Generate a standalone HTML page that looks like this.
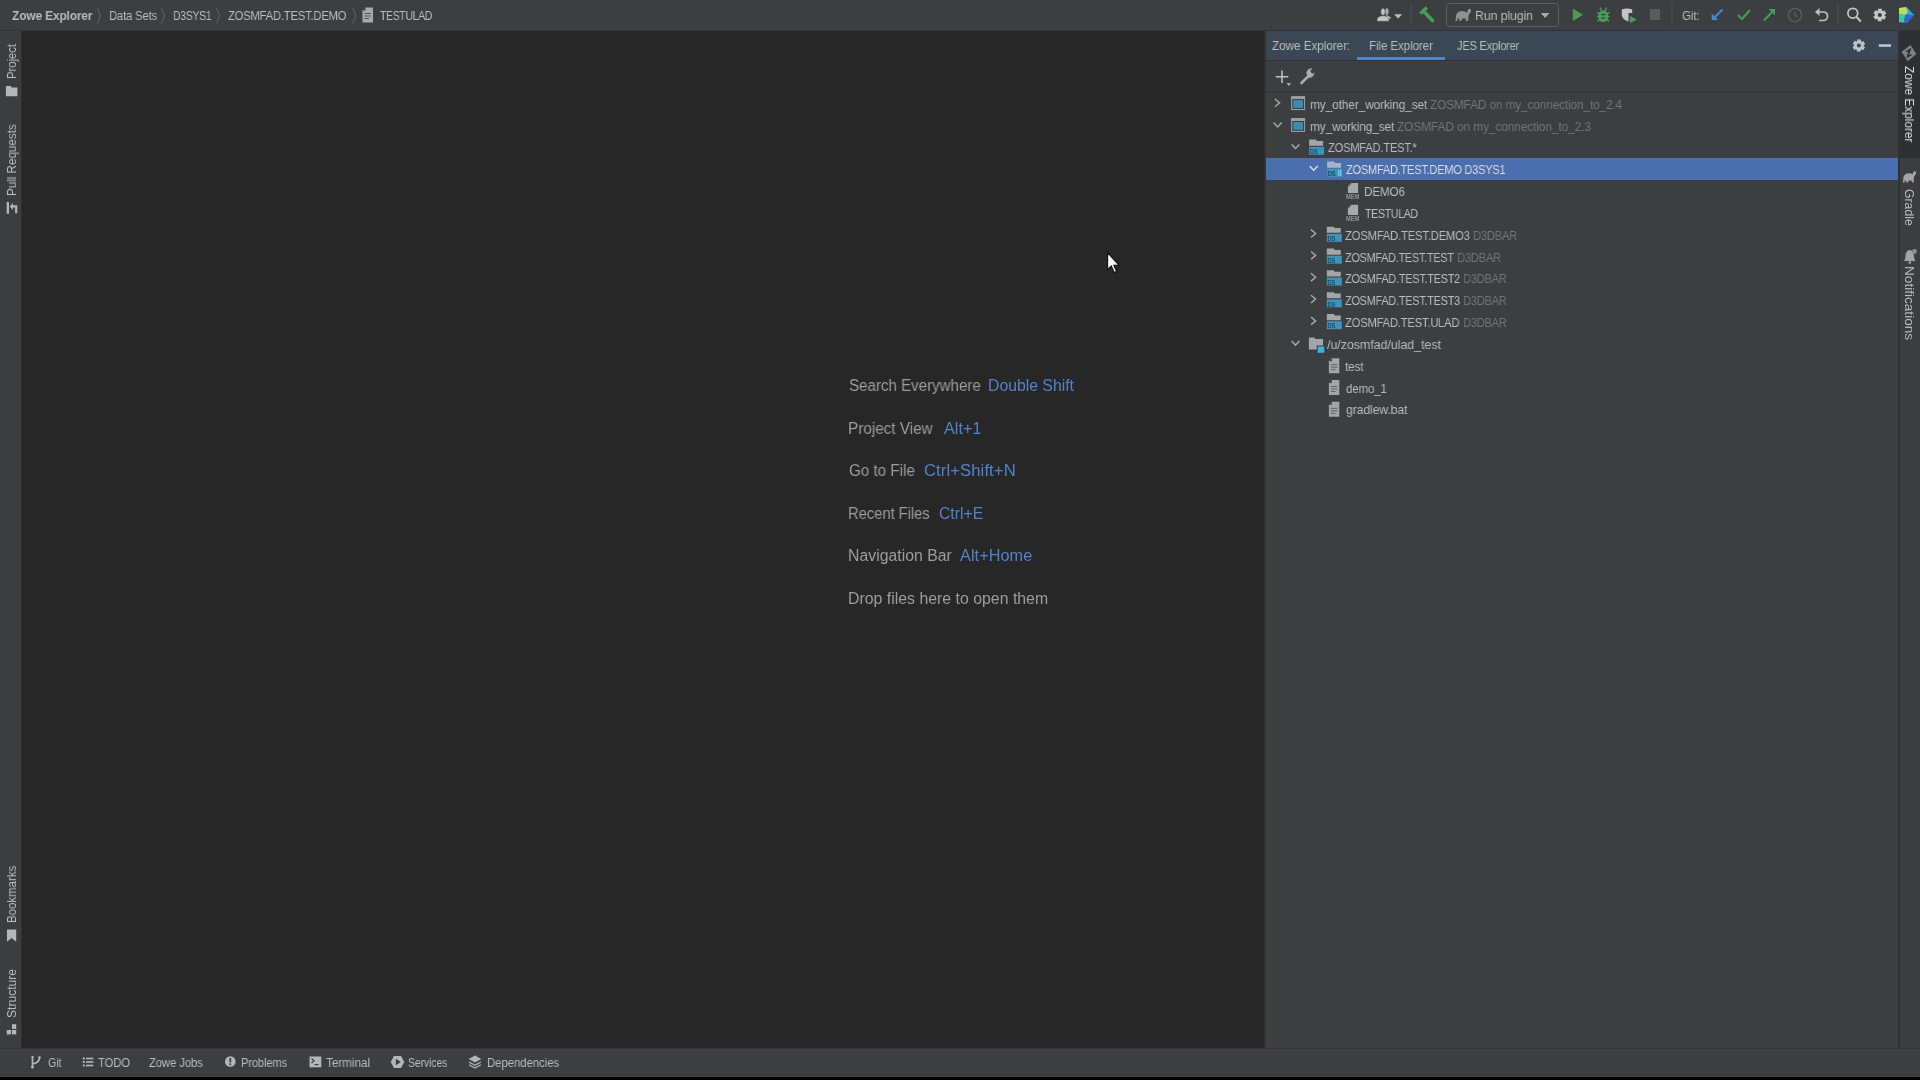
<!DOCTYPE html>
<html><head><meta charset="utf-8"><title>Zowe Explorer</title>
<style>
html,body{margin:0;padding:0;width:1920px;height:1080px;overflow:hidden;background:#000;}
body{position:relative;font-family:"Liberation Sans",sans-serif;}
.r{position:absolute;}
.t{position:absolute;white-space:nowrap;transform-origin:0 0;font-family:"Liberation Sans",sans-serif;will-change:transform;}
svg{position:absolute;overflow:visible;}
</style></head><body>
<!-- top bar -->
<div class="r" style="left:0;top:0;width:1920px;height:31px;background:#3C3E42"></div>
<div class="r" style="left:0;top:30px;width:1920px;height:1px;background:#323437"></div>
<!-- left strip -->
<div class="r" style="left:0;top:31px;width:21px;height:1018px;background:#3C3D41"></div>
<div class="r" style="left:21px;top:31px;width:1px;height:1018px;background:#2F2F31"></div>
<!-- editor -->
<div class="r" style="left:22px;top:31px;width:1242px;height:1018px;background:#272727"></div>
<!-- panel -->
<div class="r" style="left:1264px;top:31px;width:1px;height:1018px;background:#2E302F"></div>
<div class="r" style="left:1265px;top:31px;width:1px;height:1018px;background:#363836"></div>
<div class="r" style="left:1266px;top:31px;width:632px;height:1018px;background:#3C3E42"></div>
<div class="r" style="left:1266px;top:92px;width:6px;height:957px;background:#3E3F3E"></div>
<div class="r" style="left:1266px;top:31px;width:632px;height:29px;background:#3B4755"></div>
<div class="r" style="left:1266px;top:60px;width:632px;height:1px;background:#323438"></div>
<div class="r" style="left:1357px;top:57px;width:88px;height:3px;background:#4A88C7"></div>
<div class="r" style="left:1266px;top:61px;width:632px;height:3px;background:#3F3F41"></div>
<div class="r" style="left:1266px;top:91px;width:632px;height:1.6px;background:#37383B"></div>
<div class="r" style="left:1266px;top:157.8px;width:632px;height:22px;background:#4B6EAF"></div>
<div class="r" style="left:1266px;top:179.8px;width:632px;height:1px;background:#343B4A"></div>
<!-- right strip -->
<div class="r" style="left:1898px;top:31px;width:2px;height:1018px;background:#2F3134"></div>
<div class="r" style="left:1900px;top:31px;width:20px;height:1018px;background:#3C3D41"></div>
<div class="r" style="left:1900px;top:31px;width:20px;height:126.5px;background:#2D2F32"></div>
<!-- status bar -->
<div class="r" style="left:0;top:1048px;width:1920px;height:1px;background:#323437"></div>
<div class="r" style="left:0;top:1049px;width:1920px;height:28px;background:#3C3E42"></div>
<div class="r" style="left:0;top:1049px;width:1920px;height:6.5px;background:#404042"></div>
<div class="r" style="left:0;top:1072px;width:1920px;height:5px;background:#3D3F3E"></div>
<div class="r" style="left:0;top:1077px;width:1920px;height:3px;background:#000"></div>
<svg width="1920" height="1080" style="left:0;top:0;will-change:transform"><path d="M97.5,8 L100.5,15.7 L97.5,23.4" fill="none" stroke="#5A5D60" stroke-width="1.2"/><path d="M161.6,8 L164.6,15.7 L161.6,23.4" fill="none" stroke="#5A5D60" stroke-width="1.2"/><path d="M216.6,8 L219.6,15.7 L216.6,23.4" fill="none" stroke="#5A5D60" stroke-width="1.2"/><path d="M352.8,8 L355.8,15.7 L352.8,23.4" fill="none" stroke="#5A5D60" stroke-width="1.2"/><path d="M365.5,7.5 H373 V22.5 H362.5 V10.5 Z" fill="#A7A9AC"/><path d="M362.5,10.5 L365.5,7.5 V10.5 Z" fill="#3C3F43"/><rect x="364.5" y="13" width="6.5" height="1" fill="#55585B"/><rect x="364.5" y="15.5" width="6.5" height="1" fill="#55585B"/><rect x="364.5" y="18" width="4.5" height="1" fill="#55585B"/><ellipse cx="1386.9" cy="11.6" rx="1.7" ry="3.4" fill="#A9ABAE"/><path d="M1385.2,15.2 Q1390.6,15.3 1391,18.6 L1388.6,19.2 Z" fill="#A9ABAE"/><ellipse cx="1383" cy="11.7" rx="2.2" ry="3.5" fill="#C2C4C7" stroke="#3C3E42" stroke-width="0.5"/><path d="M1377,21.2 V19.6 Q1377.6,16 1383,15.8 Q1388.4,16 1389,19.6 V21.2 Z" fill="#C2C4C7" stroke="#3C3E42" stroke-width="0.4"/><path d="M1394,14.2 H1402.2 L1398.1,18.6 Z" fill="#BDBFC2"/><rect x="1410.5" y="4" width="1" height="21" fill="#4E5154"/><rect x="1671.5" y="4" width="1" height="21" fill="#4E5154"/><rect x="1837.5" y="4" width="1" height="21" fill="#4E5154"/><path d="M1423.6,11.2 L1432.4,20.6" stroke="#499C54" stroke-width="3.6" stroke-linecap="round"/><path d="M1420.4,13.6 L1426.9,7.4" stroke="#499C54" stroke-width="3.4" stroke-linecap="butt"/><rect x="1446.5" y="3.5" width="112" height="23" rx="3" fill="none" stroke="#5B5E61" stroke-width="1"/><path d="M1455.5,21 L1456,16 Q1456.5,11.5 1461.5,11 Q1465.5,11 1467,13 Q1467.5,9 1469.5,8.8 Q1471.5,9 1471,11.5 Q1470,13 1468.8,14.5 L1468,21 L1466,21 L1465.5,18.5 L1462,18.5 L1461.5,21 L1459.5,21 L1459,18.5 L1457.5,18.5 L1457.2,21 Z" fill="#8F9194"/><path d="M1540.8,13 H1549.4 L1545.1,18 Z" fill="#A9ABAE"/><path d="M1572.8,8.6 L1583,14.85 L1572.8,21.1 Z" fill="#499C54"/><ellipse cx="1603.2" cy="16.2" rx="5" ry="6" fill="#499C54"/><path d="M1600,7.5 L1601.5,11 M1606.5,7.5 L1605,11 M1597,12.5 L1600,13.5 M1609.5,12.5 L1606.5,13.5 M1597,16.5 H1600 M1609.5,16.5 H1606.5 M1597.5,21 L1600,19.5 M1609,21 L1606.5,19.5" stroke="#499C54" stroke-width="1.5"/><rect x="1601.5" y="14" width="3.5" height="1.2" fill="#2E3B30"/><rect x="1601.5" y="17.5" width="3.5" height="1.2" fill="#2E3B30"/><path d="M1621.8,9.5 Q1627,7.6 1632.2,9.5 V13 H1628.5 V21.5 Q1623,20 1621.8,15.5 Z" fill="#C3C5C7"/><path d="M1629.8,15.8 L1636.8,19.5 L1629.8,23.2 Z" fill="#499C54"/><rect x="1650" y="9" width="10" height="11" fill="#595B5E"/><path d="M1722.5,9.5 L1714,18" stroke="#3E8ED0" stroke-width="2"/><path d="M1711.7,20 V13.5 L1718.2,20 Z" fill="#3E8ED0"/><path d="M1738,15 L1742,19 L1750,10" fill="none" stroke="#499C54" stroke-width="2.2"/><path d="M1763.8,20.5 L1772,12.3" stroke="#499C54" stroke-width="2"/><path d="M1775,9 V15.5 L1768.5,9 Z" fill="#499C54"/><circle cx="1795" cy="15" r="6.6" fill="none" stroke="#5C5F62" stroke-width="1.3"/><path d="M1795,11.5 V15.5 L1797.5,17" fill="none" stroke="#5C5F62" stroke-width="1.2"/><path d="M1817,12 H1823 Q1827.5,12 1827.5,16.3 Q1827.5,20.5 1823,20.5 H1819" fill="none" stroke="#BDBFC1" stroke-width="1.6"/><path d="M1815,12 L1819.5,8 V16 Z" fill="#BDBFC1"/><circle cx="1852.8" cy="13.2" r="4.9" fill="none" stroke="#C3C5C7" stroke-width="1.8"/><path d="M1856.3,16.8 L1860.8,21.5" stroke="#C3C5C7" stroke-width="2"/><path d="M1877.85,8.69 L1881.75,8.69 L1881.97,10.50 L1881.29,10.23 L1883.18,11.32 L1884.29,10.16 L1886.24,13.54 L1884.79,14.63 L1884.68,13.91 L1884.68,16.09 L1886.24,16.46 L1884.29,19.84 L1882.61,19.13 L1883.18,18.68 L1881.29,19.77 L1881.75,21.31 L1877.85,21.31 L1877.63,19.50 L1878.31,19.77 L1876.42,18.68 L1875.31,19.84 L1873.36,16.46 L1874.81,15.37 L1874.92,16.09 L1874.92,13.91 L1873.36,13.54 L1875.31,10.16 L1876.99,10.87 L1876.42,11.32 L1878.31,10.23 Z" fill="#C3C5C7"/><circle cx="1879.8" cy="15.0" r="2.1" fill="#3C3F43"/><path d="M1899,8 L1906,7 L1914,15 L1907,23 L1899,22 Z" fill="#2F8BD0"/><path d="M1899,8 L1906,7 L1910,11 L1905,15 L1899,14 Z" fill="#B7E05A"/><path d="M1899,14 L1905,15 L1904,22.5 L1899,22 Z" fill="#3BC9A8"/><path d="M1906,7 L1914,15 L1909,15 Z" fill="#29A8E0"/><path d="M1905,15 L1914,15 L1907,23 L1904,22.5 Z" fill="#3A64C8"/><path d="M1857.01,39.39 L1860.79,39.39 L1861.03,41.09 L1860.36,40.82 L1862.22,41.89 L1863.25,40.80 L1865.14,44.08 L1863.79,45.14 L1863.68,44.43 L1863.68,46.57 L1865.14,46.92 L1863.25,50.20 L1861.66,49.55 L1862.22,49.11 L1860.36,50.18 L1860.79,51.61 L1857.01,51.61 L1856.77,49.91 L1857.44,50.18 L1855.58,49.11 L1854.55,50.20 L1852.66,46.92 L1854.01,45.86 L1854.12,46.57 L1854.12,44.43 L1852.66,44.08 L1854.55,40.80 L1856.14,41.45 L1855.58,41.89 L1857.44,40.82 Z" fill="#BFC3C8"/><circle cx="1858.9" cy="45.5" r="2.0" fill="#3B4755"/><rect x="1878.8" y="44.3" width="12.2" height="2.5" fill="#C5C9CD"/><path d="M1282,70.5 V83 M1275.7,76.8 H1288.3" stroke="#BEC0C2" stroke-width="1.6"/><path d="M1286.5,83.2 H1291 L1288.75,85.8 Z" fill="#BEC0C2"/><path d="M1301.5,83 L1308,76.5" stroke="#A9ABAE" stroke-width="2.6" stroke-linecap="round"/><path d="M1306.2,73.5 Q1307,68.2 1312.6,68.3 L1310.3,70.8 L1311.4,73 L1313.7,73.8 L1314.4,71.2 Q1314.8,77 1309.3,78 Z" fill="#A9ABAE"/><path d="M1274.8999999999999,99.0 L1279.6000000000001,102.85 L1274.8999999999999,106.7" fill="none" stroke="#A7A9AC" stroke-width="1.4"/><path d="M1273.6,122.6 L1277.65,126.9 L1281.7,122.6" fill="none" stroke="#A7A9AC" stroke-width="1.4"/><path d="M1291.6,144.4 L1295.5,148.5 L1299.4,144.4" fill="none" stroke="#A7A9AC" stroke-width="1.4"/><path d="M1309.6,166.1 L1313.7,170.20000000000002 L1317.8000000000002,166.1" fill="none" stroke="#D5DCE8" stroke-width="1.4"/><path d="M1311.0,229.64 L1315.6000000000001,233.54 L1311.0,237.44" fill="none" stroke="#A7A9AC" stroke-width="1.4"/><path d="M1311.0,251.48 L1315.6000000000001,255.38 L1311.0,259.28" fill="none" stroke="#A7A9AC" stroke-width="1.4"/><path d="M1311.0,273.32000000000005 L1315.6000000000001,277.22 L1311.0,281.12" fill="none" stroke="#A7A9AC" stroke-width="1.4"/><path d="M1311.0,295.16 L1315.6000000000001,299.06 L1311.0,302.96" fill="none" stroke="#A7A9AC" stroke-width="1.4"/><path d="M1311.0,317.0 L1315.6000000000001,320.9 L1311.0,324.79999999999995" fill="none" stroke="#A7A9AC" stroke-width="1.4"/><path d="M1291.6,340.90000000000003 L1295.5,345.09999999999997 L1299.4,340.90000000000003" fill="none" stroke="#A7A9AC" stroke-width="1.4"/><rect x="1291.1" y="96.1" width="14" height="14" fill="#9C9EA1"/><rect x="1292.3" y="99.1" width="11.8" height="9.8" fill="#2D3C48"/><rect x="1293.3" y="100.1" width="9.8" height="7.8" fill="#3B8DAD"/><rect x="1291.1" y="118.0" width="14" height="14" fill="#9C9EA1"/><rect x="1292.3" y="121.0" width="11.8" height="9.8" fill="#2D3C48"/><rect x="1293.3" y="122.0" width="9.8" height="7.8" fill="#3B8DAD"/><path d="M1309.1,139.6 H1316.1 L1316.8999999999999,141.0 H1323.1 V145.79999999999998 H1309.1 Z" fill="#A3A5A8"/><rect x="1309.1" y="146.79999999999998" width="15" height="8" fill="#3D93BA"/><text x="1309.6999999999998" y="154.0" font-family="Liberation Sans" font-size="8" font-weight="700" fill="#2A4A5E" textLength="8" lengthAdjust="spacingAndGlyphs">DS</text><path d="M1327.1,161.6 H1334.1 L1334.8999999999999,163.0 H1341.1 V167.79999999999998 H1327.1 Z" fill="#A9B3C6"/><rect x="1327.1" y="168.79999999999998" width="15" height="8" fill="#3D93BA"/><text x="1327.6999999999998" y="176.0" font-family="Liberation Sans" font-size="8" font-weight="700" fill="#2A4A5E" textLength="8" lengthAdjust="spacingAndGlyphs">DS</text><rect x="1338.1" y="169.6" width="1.2" height="6.5" fill="#6FD8F0"/><rect x="1340.1" y="169.6" width="1.2" height="6.5" fill="#6FD8F0"/><path d="M1326.8,226.64 H1333.8 L1334.6,228.04 H1340.8 V232.83999999999997 H1326.8 Z" fill="#A3A5A8"/><rect x="1326.8" y="233.83999999999997" width="15" height="8" fill="#3D93BA"/><text x="1327.3999999999999" y="241.04" font-family="Liberation Sans" font-size="8" font-weight="700" fill="#2A4A5E" textLength="8" lengthAdjust="spacingAndGlyphs">DS</text><path d="M1326.8,248.48 H1333.8 L1334.6,249.88 H1340.8 V254.67999999999998 H1326.8 Z" fill="#A3A5A8"/><rect x="1326.8" y="255.67999999999998" width="15" height="8" fill="#3D93BA"/><text x="1327.3999999999999" y="262.88" font-family="Liberation Sans" font-size="8" font-weight="700" fill="#2A4A5E" textLength="8" lengthAdjust="spacingAndGlyphs">DS</text><path d="M1326.8,270.32000000000005 H1333.8 L1334.6,271.72 H1340.8 V276.52000000000004 H1326.8 Z" fill="#A3A5A8"/><rect x="1326.8" y="277.52000000000004" width="15" height="8" fill="#3D93BA"/><text x="1327.3999999999999" y="284.72" font-family="Liberation Sans" font-size="8" font-weight="700" fill="#2A4A5E" textLength="8" lengthAdjust="spacingAndGlyphs">DS</text><path d="M1326.8,292.16 H1333.8 L1334.6,293.56 H1340.8 V298.36 H1326.8 Z" fill="#A3A5A8"/><rect x="1326.8" y="299.36" width="15" height="8" fill="#3D93BA"/><text x="1327.3999999999999" y="306.56" font-family="Liberation Sans" font-size="8" font-weight="700" fill="#2A4A5E" textLength="8" lengthAdjust="spacingAndGlyphs">DS</text><path d="M1326.8,314.0 H1333.8 L1334.6,315.4 H1340.8 V320.2 H1326.8 Z" fill="#A3A5A8"/><rect x="1326.8" y="321.2" width="15" height="8" fill="#3D93BA"/><text x="1327.3999999999999" y="328.4" font-family="Liberation Sans" font-size="8" font-weight="700" fill="#2A4A5E" textLength="8" lengthAdjust="spacingAndGlyphs">DS</text><path d="M1351.1,182.9 H1358.1 V193.1 H1347.8999999999999 V186.70000000000002 Z" fill="#A6A8AB"/><path d="M1347.8999999999999,186.1 L1350.5,183.5 V186.1 Z" fill="#A6A8AB"/><path d="M1348.0,186.70000000000002 L1351.1,183.6" stroke="#3C3E42" stroke-width="0.8"/><text x="1345.8999999999999" y="198.9" font-family="Liberation Sans" font-size="6.5" font-weight="700" fill="#909295" textLength="13.4" lengthAdjust="spacingAndGlyphs">MEM</text><path d="M1351.1,204.74 H1358.1 V214.94 H1347.8999999999999 V208.54000000000002 Z" fill="#A6A8AB"/><path d="M1347.8999999999999,207.94 L1350.5,205.34 V207.94 Z" fill="#A6A8AB"/><path d="M1348.0,208.54000000000002 L1351.1,205.44" stroke="#3C3E42" stroke-width="0.8"/><text x="1345.8999999999999" y="220.74" font-family="Liberation Sans" font-size="6.5" font-weight="700" fill="#909295" textLength="13.4" lengthAdjust="spacingAndGlyphs">MEM</text><path d="M1308.9,337.5 H1314.5 L1315.5,339 H1323 V349.4 H1308.9 Z" fill="#A3A5A8"/><rect x="1316.7" y="345.5" width="8.6" height="8.2" fill="#3C3E42"/><rect x="1317.7" y="346.5" width="6.6" height="6.3" fill="#3EB1E0"/><path d="M1331.9,358.18 H1339.3000000000002 V373.18 H1328.9 V361.18 Z" fill="#A3A5A8"/><path d="M1328.9,361.18 L1331.9,358.18 V361.18 Z" fill="#3C3E42"/><rect x="1330.9" y="364.18" width="6.4" height="1" fill="#5E6063"/><rect x="1330.9" y="366.68" width="6.4" height="1" fill="#5E6063"/><rect x="1330.9" y="369.18" width="4.5" height="1" fill="#5E6063"/><path d="M1331.9,380.02000000000004 H1339.3000000000002 V395.02000000000004 H1328.9 V383.02000000000004 Z" fill="#A3A5A8"/><path d="M1328.9,383.02000000000004 L1331.9,380.02000000000004 V383.02000000000004 Z" fill="#3C3E42"/><rect x="1330.9" y="386.02000000000004" width="6.4" height="1" fill="#5E6063"/><rect x="1330.9" y="388.52000000000004" width="6.4" height="1" fill="#5E6063"/><rect x="1330.9" y="391.02000000000004" width="4.5" height="1" fill="#5E6063"/><path d="M1331.9,401.86 H1339.3000000000002 V416.86 H1328.9 V404.86 Z" fill="#A3A5A8"/><path d="M1328.9,404.86 L1331.9,401.86 V404.86 Z" fill="#3C3E42"/><rect x="1330.9" y="407.86" width="6.4" height="1" fill="#5E6063"/><rect x="1330.9" y="410.36" width="6.4" height="1" fill="#5E6063"/><rect x="1330.9" y="412.86" width="4.5" height="1" fill="#5E6063"/><path d="M1910.5,45 L1916.3,54 L1907.6,61.2 L1901.6,51.8 Z" fill="#7F8082"/><path d="M1906.2,51.6 L1910,49.6 L1907.6,56.6 L1911.6,54.6" fill="none" stroke="#2A2B2D" stroke-width="1.6" stroke-linejoin="miter"/><path d="M1903,182.4 L1903.3,178 Q1904,173.5 1909,173.3 Q1911.5,173.3 1912.5,174.5 Q1913,171.3 1915,171.3 Q1916.5,171.5 1916,173.8 Q1915,175.5 1914,176.5 L1913.5,182.4 L1912,182.4 L1911.5,180.5 L1908.5,180.5 L1908,182.4 L1906.3,182.4 L1906,180.5 L1904.8,180.5 L1904.5,182.4 Z" fill="#A3A5A8"/><path d="M1904,261 Q1905.5,259.5 1905.5,255.5 Q1905.8,250.5 1909.8,250 Q1913.5,250.5 1913.8,255.5 Q1914,259.5 1915.5,261 Z" fill="#A3A5A8"/><circle cx="1909.8" cy="262.6" r="1.3" fill="#A3A5A8"/><circle cx="1914.5" cy="251.5" r="2.4" fill="#8F8F8F"/><path d="M5.9,86 H10.5 L11.8,87.5 H17.4 V96.2 H5.9 Z" fill="#B4B6B8"/><rect x="6.7" y="202" width="2.3" height="11.8" fill="#B4B6B8"/><path d="M16.2,213.2 V206.4 H12" fill="none" stroke="#B4B6B8" stroke-width="2.2"/><path d="M9.8,206.4 L12.9,202.8 V210 Z" fill="#B4B6B8"/><path d="M7,929.5 H16.2 V941.8 L11.6,938 L7,941.8 Z" fill="#B4B6B8"/><rect x="6.8" y="1030" width="4.3" height="4.4" fill="#B4B6B8"/><rect x="12" y="1030" width="4.2" height="4.4" fill="#B4B6B8"/><rect x="12" y="1024.2" width="4.2" height="4.7" fill="#B4B6B8"/><path d="M32.5,1057 V1067.5 M32.5,1064 Q38.5,1063 39.5,1058.5" stroke="#B4B6B8" stroke-width="1.7" fill="none"/><circle cx="32.5" cy="1067.2" r="1.4" fill="#B4B6B8"/><circle cx="39.5" cy="1057.6" r="1.3" fill="#B4B6B8"/><circle cx="32.5" cy="1056.9" r="1.1" fill="#B4B6B8"/><rect x="82.8" y="1057.5" width="2" height="2" fill="#B4B6B8"/><rect x="82.8" y="1061" width="2" height="2" fill="#B4B6B8"/><rect x="82.8" y="1064.5" width="2" height="2" fill="#B4B6B8"/><rect x="86" y="1057.7" width="7.3" height="1.6" fill="#B4B6B8"/><rect x="86" y="1061.2" width="7.3" height="1.6" fill="#B4B6B8"/><rect x="86" y="1064.7" width="7.3" height="1.6" fill="#B4B6B8"/><circle cx="230.3" cy="1061.5" r="5.3" fill="#B4B6B8"/><rect x="229.4" y="1058" width="1.8" height="4.4" fill="#3C3E42"/><rect x="229.4" y="1063.4" width="1.8" height="1.7" fill="#3C3E42"/><rect x="309.5" y="1056.5" width="11.8" height="10.8" fill="#B4B6B8"/><path d="M311.5,1058.5 L314,1060.8 L311.5,1063" stroke="#3C3E42" stroke-width="1.2" fill="none"/><rect x="314.5" y="1064" width="4" height="1.2" fill="#3C3E42"/><path d="M394,1056 H401 L404.3,1062 L401,1068 H394 L390.7,1062 Z" fill="#B4B6B8"/><path d="M395.8,1058.8 L400.8,1062 L395.8,1065.2 Z" fill="#3C3E42"/><path d="M475,1055.5 L481.4,1059 L475,1062.5 L468.7,1059 Z" fill="#B4B6B8"/><path d="M469,1062 L475,1065.2 L481,1062 M469,1064.8 L475,1068 L481,1064.8" stroke="#B4B6B8" stroke-width="1.3" fill="none"/><path d="M1107.6,252.6 L1107.6,269.6 L1111.3,266 L1114.2,272.6 L1116.6,271.6 L1113.8,265.2 L1118.6,265 Z" fill="#F7F8FA" stroke="#101010" stroke-width="1.1" stroke-linejoin="miter"/></svg>
<div class="t" style="left:12.00px;top:9.09px;font-size:13.6px;line-height:13.6px;font-weight:700;color:#BBBBBB;letter-spacing:-0.177px;transform:scaleX(0.8791)">Zowe Explorer</div>
<div class="t" style="left:108.57px;top:9.09px;font-size:13.6px;line-height:13.6px;font-weight:400;color:#BBBBBB;letter-spacing:-0.234px;transform:scaleX(0.8330)">Data Sets</div>
<div class="t" style="left:172.97px;top:9.09px;font-size:13.6px;line-height:13.6px;font-weight:400;color:#BBBBBB;letter-spacing:-0.444px;transform:scaleX(0.7755)">D3SYS1</div>
<div class="t" style="left:228.00px;top:9.09px;font-size:13.6px;line-height:13.6px;font-weight:400;color:#BBBBBB;letter-spacing:-0.295px;transform:scaleX(0.8311)">ZOSMFAD.TEST.DEMO</div>
<div class="t" style="left:380.00px;top:9.09px;font-size:13.6px;line-height:13.6px;font-weight:400;color:#BBBBBB;letter-spacing:-0.454px;transform:scaleX(0.7720)">TESTULAD</div>
<div class="t" style="left:1475.09px;top:8.89px;font-size:13.6px;line-height:13.6px;font-weight:400;color:#BBBBBB;letter-spacing:-0.120px;transform:scaleX(0.9076)">Run plugin</div>
<div class="t" style="left:1681.70px;top:8.59px;font-size:13.6px;line-height:13.6px;font-weight:400;color:#BBBBBB;letter-spacing:-0.193px;transform:scaleX(0.8489)">Git:</div>
<div class="t" style="left:1271.90px;top:39.46px;font-size:13.4px;line-height:13.4px;font-weight:400;color:#BBBBBB;letter-spacing:-0.145px;transform:scaleX(0.8863)">Zowe Explorer:</div>
<div class="t" style="left:1368.83px;top:39.46px;font-size:13.4px;line-height:13.4px;font-weight:400;color:#BBBBBB;letter-spacing:-0.150px;transform:scaleX(0.8710)">File Explorer</div>
<div class="t" style="left:1456.50px;top:39.46px;font-size:13.4px;line-height:13.4px;font-weight:400;color:#BBBBBB;letter-spacing:-0.239px;transform:scaleX(0.8245)">JES Explorer</div>
<div class="t" style="left:1309.50px;top:97.67px;font-size:13.5px;line-height:13.5px;font-weight:400;color:#BBBBBB;letter-spacing:-0.156px;transform:scaleX(0.8828)">my_other_working_set</div>
<div class="t" style="left:1430.30px;top:97.67px;font-size:13.5px;line-height:13.5px;font-weight:400;color:#737476;letter-spacing:-0.168px;transform:scaleX(0.8788)">ZOSMFAD on my_connection_to_2.4</div>
<div class="t" style="left:1309.60px;top:119.51px;font-size:13.5px;line-height:13.5px;font-weight:400;color:#BBBBBB;letter-spacing:-0.162px;transform:scaleX(0.8841)">my_working_set</div>
<div class="t" style="left:1396.70px;top:119.51px;font-size:13.5px;line-height:13.5px;font-weight:400;color:#737476;letter-spacing:-0.157px;transform:scaleX(0.8860)">ZOSMFAD on my_connection_to_2.3</div>
<div class="t" style="left:1327.50px;top:141.35px;font-size:13.5px;line-height:13.5px;font-weight:400;color:#BBBBBB;letter-spacing:-0.282px;transform:scaleX(0.8280)">ZOSMFAD.TEST.*</div>
<div class="t" style="left:1345.80px;top:163.19px;font-size:13.5px;line-height:13.5px;font-weight:400;color:#D8DBE0;letter-spacing:-0.303px;transform:scaleX(0.8193)">ZOSMFAD.TEST.DEMO D3SYS1</div>
<div class="t" style="left:1363.83px;top:185.03px;font-size:13.5px;line-height:13.5px;font-weight:400;color:#BBBBBB;letter-spacing:-0.277px;transform:scaleX(0.8724)">DEMO6</div>
<div class="t" style="left:1364.70px;top:206.87px;font-size:13.5px;line-height:13.5px;font-weight:400;color:#BBBBBB;letter-spacing:-0.421px;transform:scaleX(0.7859)">TESTULAD</div>
<div class="t" style="left:1345.20px;top:228.71px;font-size:13.5px;line-height:13.5px;font-weight:400;color:#BBBBBB;letter-spacing:-0.276px;transform:scaleX(0.8386)">ZOSMFAD.TEST.DEMO3</div>
<div class="t" style="left:1472.77px;top:228.71px;font-size:13.5px;line-height:13.5px;font-weight:400;color:#737476;letter-spacing:-0.342px;transform:scaleX(0.8335)">D3DBAR</div>
<div class="t" style="left:1345.20px;top:250.55px;font-size:13.5px;line-height:13.5px;font-weight:400;color:#BBBBBB;letter-spacing:-0.326px;transform:scaleX(0.8064)">ZOSMFAD.TEST.TEST</div>
<div class="t" style="left:1456.87px;top:250.55px;font-size:13.5px;line-height:13.5px;font-weight:400;color:#737476;letter-spacing:-0.345px;transform:scaleX(0.8319)">D3DBAR</div>
<div class="t" style="left:1345.20px;top:272.39px;font-size:13.5px;line-height:13.5px;font-weight:400;color:#BBBBBB;letter-spacing:-0.318px;transform:scaleX(0.8092)">ZOSMFAD.TEST.TEST2</div>
<div class="t" style="left:1462.92px;top:272.39px;font-size:13.5px;line-height:13.5px;font-weight:400;color:#737476;letter-spacing:-0.358px;transform:scaleX(0.8262)">D3DBAR</div>
<div class="t" style="left:1345.20px;top:294.23px;font-size:13.5px;line-height:13.5px;font-weight:400;color:#BBBBBB;letter-spacing:-0.318px;transform:scaleX(0.8092)">ZOSMFAD.TEST.TEST3</div>
<div class="t" style="left:1462.92px;top:294.23px;font-size:13.5px;line-height:13.5px;font-weight:400;color:#737476;letter-spacing:-0.358px;transform:scaleX(0.8262)">D3DBAR</div>
<div class="t" style="left:1345.20px;top:316.07px;font-size:13.5px;line-height:13.5px;font-weight:400;color:#BBBBBB;letter-spacing:-0.279px;transform:scaleX(0.8345)">ZOSMFAD.TEST.ULAD</div>
<div class="t" style="left:1462.92px;top:316.07px;font-size:13.5px;line-height:13.5px;font-weight:400;color:#737476;letter-spacing:-0.358px;transform:scaleX(0.8262)">D3DBAR</div>
<div class="t" style="left:1326.80px;top:337.91px;font-size:13.5px;line-height:13.5px;font-weight:400;color:#BBBBBB;letter-spacing:-0.087px;transform:scaleX(0.9272)">/u/zosmfad/ulad_test</div>
<div class="t" style="left:1345.20px;top:359.75px;font-size:13.5px;line-height:13.5px;font-weight:400;color:#BBBBBB;letter-spacing:-0.177px;transform:scaleX(0.8707)">test</div>
<div class="t" style="left:1345.60px;top:381.59px;font-size:13.5px;line-height:13.5px;font-weight:400;color:#BBBBBB;letter-spacing:-0.255px;transform:scaleX(0.8595)">demo_1</div>
<div class="t" style="left:1345.60px;top:403.43px;font-size:13.5px;line-height:13.5px;font-weight:400;color:#BBBBBB;letter-spacing:-0.121px;transform:scaleX(0.9054)">gradlew.bat</div>
<div class="t" style="left:849.40px;top:378.09px;font-size:15.6px;line-height:15.6px;font-weight:400;color:#9D9D9D;letter-spacing:-0.040px;transform:scaleX(0.9736)">Search Everywhere</div>
<div class="t" style="left:988.39px;top:378.09px;font-size:15.6px;line-height:15.6px;font-weight:400;color:#5283C9;letter-spacing:0.013px;transform:scaleX(1.0099)">Double Shift</div>
<div class="t" style="left:848.42px;top:420.59px;font-size:15.6px;line-height:15.6px;font-weight:400;color:#9D9D9D;letter-spacing:-0.024px;transform:scaleX(0.9825)">Project View</div>
<div class="t" style="left:943.75px;top:420.59px;font-size:15.6px;line-height:15.6px;font-weight:400;color:#5283C9;letter-spacing:0.057px;transform:scaleX(1.0371)">Alt+1</div>
<div class="t" style="left:849.40px;top:463.09px;font-size:15.6px;line-height:15.6px;font-weight:400;color:#9D9D9D;letter-spacing:-0.029px;transform:scaleX(0.9780)">Go to File</div>
<div class="t" style="left:923.50px;top:463.09px;font-size:15.6px;line-height:15.6px;font-weight:400;color:#5283C9;letter-spacing:0.088px;transform:scaleX(1.0670)">Ctrl+Shift+N</div>
<div class="t" style="left:848.45px;top:505.89px;font-size:15.6px;line-height:15.6px;font-weight:400;color:#9D9D9D;letter-spacing:-0.069px;transform:scaleX(0.9506)">Recent Files</div>
<div class="t" style="left:939.20px;top:505.89px;font-size:15.6px;line-height:15.6px;font-weight:400;color:#5283C9;letter-spacing:0.013px;transform:scaleX(1.0087)">Ctrl+E</div>
<div class="t" style="left:848.39px;top:548.49px;font-size:15.6px;line-height:15.6px;font-weight:400;color:#9D9D9D;letter-spacing:0.017px;transform:scaleX(1.0127)">Navigation Bar</div>
<div class="t" style="left:960.40px;top:548.49px;font-size:15.6px;line-height:15.6px;font-weight:400;color:#5283C9;letter-spacing:0.069px;transform:scaleX(1.0406)">Alt+Home</div>
<div class="t" style="left:848.39px;top:590.99px;font-size:15.6px;line-height:15.6px;font-weight:400;color:#9D9D9D;letter-spacing:0.018px;transform:scaleX(1.0145)">Drop files here to open them</div>
<div class="t" style="left:47.70px;top:1056.84px;font-size:12px;line-height:12px;font-weight:400;color:#BBBBBB;letter-spacing:-0.159px;transform:scaleX(0.8927)">Git</div>
<div class="t" style="left:98.00px;top:1056.84px;font-size:12px;line-height:12px;font-weight:400;color:#BBBBBB;letter-spacing:-0.124px;transform:scaleX(0.9395)">TODO</div>
<div class="t" style="left:149.00px;top:1056.84px;font-size:12px;line-height:12px;font-weight:400;color:#BBBBBB;letter-spacing:-0.082px;transform:scaleX(0.9378)">Zowe Jobs</div>
<div class="t" style="left:241.40px;top:1056.84px;font-size:12px;line-height:12px;font-weight:400;color:#BBBBBB;letter-spacing:-0.102px;transform:scaleX(0.9226)">Problems</div>
<div class="t" style="left:326.25px;top:1056.84px;font-size:12px;line-height:12px;font-weight:400;color:#BBBBBB;letter-spacing:-0.027px;transform:scaleX(0.9766)">Terminal</div>
<div class="t" style="left:408.40px;top:1056.84px;font-size:12px;line-height:12px;font-weight:400;color:#BBBBBB;letter-spacing:-0.151px;transform:scaleX(0.8764)">Services</div>
<div class="t" style="left:486.60px;top:1056.84px;font-size:12px;line-height:12px;font-weight:400;color:#BBBBBB;letter-spacing:-0.064px;transform:scaleX(0.9491)">Dependencies</div>
<div class="t" style="left:6.39px;top:78.90px;font-size:12px;line-height:12px;color:#BBBBBB;transform:rotate(-90deg) scaleX(0.9365)">Project</div>
<div class="t" style="left:6.39px;top:195.60px;font-size:12px;line-height:12px;color:#BBBBBB;transform:rotate(-90deg) scaleX(0.9684)">Pull Requests</div>
<div class="t" style="left:6.49px;top:923.30px;font-size:12px;line-height:12px;color:#BBBBBB;transform:rotate(-90deg) scaleX(0.9547)">Bookmarks</div>
<div class="t" style="left:6.49px;top:1017.50px;font-size:12px;line-height:12px;color:#BBBBBB;transform:rotate(-90deg) scaleX(1.0059)">Structure</div>
<div class="t" style="left:1914.91px;top:65.50px;font-size:12px;line-height:12px;color:#DCDCDC;transform:rotate(90deg) scaleX(0.9888)">Zowe Explorer</div>
<div class="t" style="left:1915.41px;top:188.90px;font-size:12px;line-height:12px;color:#BBBBBB;transform:rotate(90deg) scaleX(1.0208)">Gradle</div>
<div class="t" style="left:1915.41px;top:265.70px;font-size:12px;line-height:12px;color:#BBBBBB;transform:rotate(90deg) scaleX(1.1337)">Notifications</div>
</body></html>
